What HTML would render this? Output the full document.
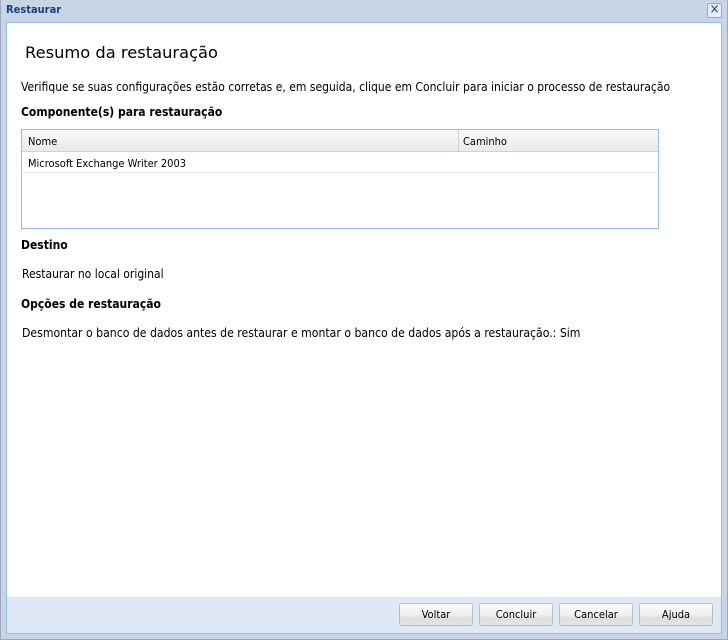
<!DOCTYPE html>
<html><head><style>
*{margin:0;padding:0;box-sizing:border-box}
body{width:728px;height:640px;overflow:hidden;background:#c9d5e5;font-family:Tahoma,"DejaVu Sans Condensed","Liberation Sans",sans-serif;font-size:11px;color:#000;position:relative}
.frame{position:absolute;left:0;top:0;width:728px;height:640px;border-left:1px solid #99a8bd;border-bottom:1px solid #99a8bd;border-right:1px solid #99a8bd}
.title{position:absolute;left:6px;top:3px;font-weight:bold;color:#15428b;font-size:11px}
.close{position:absolute;left:707px;top:3px;width:15px;height:15px;border:1px solid #98a9c6;background:#e9eef6;border-radius:2px;color:#15428b;font-size:13px;line-height:12px;text-align:center}
.body{position:absolute;left:6px;top:22px;width:716px;height:612px;border:1px solid #99bbe8;background:#fff}
.foot{position:absolute;left:0;top:574px;width:714px;height:36px;background:#dfe8f6}
.h1{position:absolute;left:25px;top:43px;font-family:"DejaVu Sans","Liberation Sans",sans-serif;font-size:16.3px;}
.t{position:absolute;font-family:"DejaVu Sans Condensed","Liberation Sans",sans-serif;font-size:12px}
.b{font-weight:bold}
.tbl{position:absolute;left:21px;top:129px;width:638px;height:100px;border:1px solid #99bbe8}
.hd{height:22px;background:linear-gradient(#f9f9f9,#e9eaec);border-bottom:1px solid #d0d0d0;position:relative}
.hd span,.row span{position:absolute;top:5px;font-size:11px;font-family:"DejaVu Sans Condensed","Liberation Sans",sans-serif}
.row{height:21px;border-bottom:1px solid #ededed;position:relative}
.btn{position:absolute;top:603px;width:74px;height:23px;border:1px solid #b9bec5;border-radius:3px;background:linear-gradient(#fafafa 0,#f0f0f0 50%,#dedede 70%,#e4e4e4);text-align:center;line-height:22px;font-size:11px;font-family:"DejaVu Sans Condensed","Liberation Sans",sans-serif}
</style></head><body>
<div class="frame"></div>
<div class="title">Restaurar</div>
<div class="close">×</div>
<div class="body"><div class="foot"></div></div>
<div class="h1">Resumo da restauração</div>
<div class="t" style="left:21px;top:80px">Verifique se suas configurações estão corretas e, em seguida, clique em Concluir para iniciar o processo de restauração</div>
<div class="t b" style="left:21px;top:105px">Componente(s) para restauração</div>
<div class="tbl">
<div class="hd"><span style="left:6px">Nome</span><div style="position:absolute;left:436px;top:0;width:1px;height:22px;background:#d0d0d0"></div><span style="left:441px">Caminho</span></div>
<div class="row"><span style="left:6px">Microsoft Exchange Writer 2003</span></div>
</div>
<div class="t b" style="left:21px;top:238px">Destino</div>
<div class="t" style="left:22px;top:267px">Restaurar no local original</div>
<div class="t b" style="left:21px;top:297px">Opções de restauração</div>
<div class="t" style="left:22px;top:326px;font-size:12.15px">Desmontar o banco de dados antes de restaurar e montar o banco de dados após a restauração.: Sim</div>
<div class="btn" style="left:399px">Voltar</div>
<div class="btn" style="left:479px">Concluir</div>
<div class="btn" style="left:559px">Cancelar</div>
<div class="btn" style="left:639px">Ajuda</div>
</body></html>
